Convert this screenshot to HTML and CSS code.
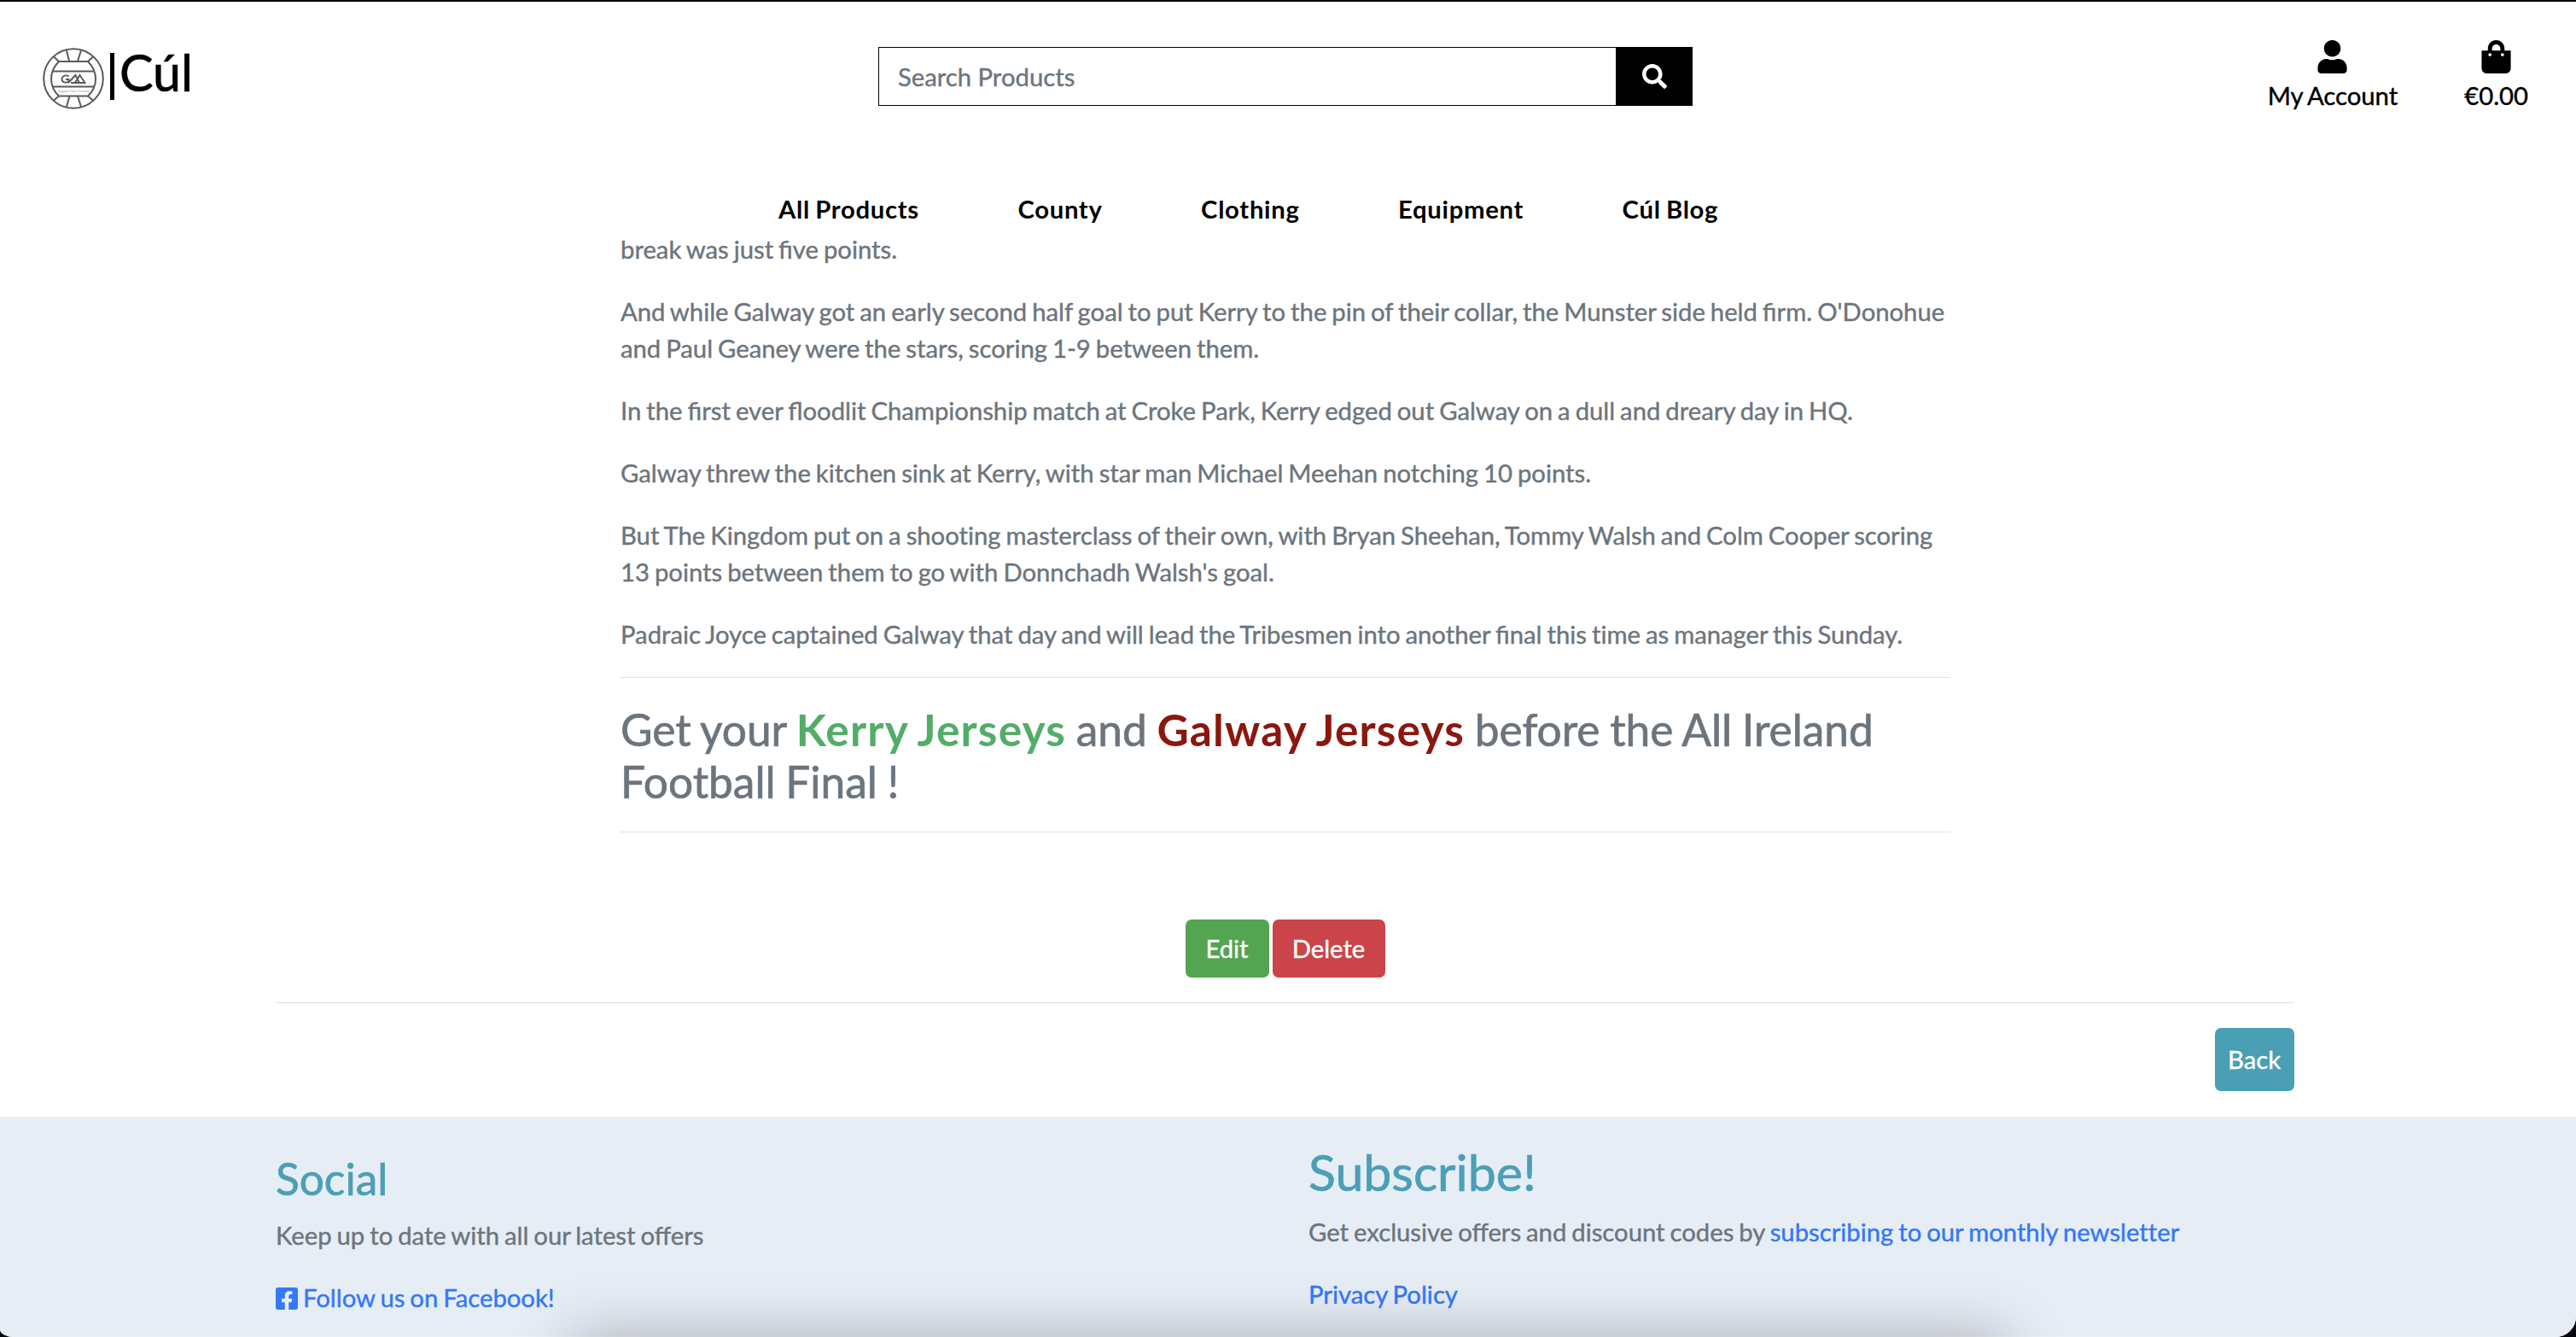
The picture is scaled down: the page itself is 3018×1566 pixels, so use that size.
FILE: index.html
```html
<!DOCTYPE html>
<html lang="en">
<head>
<meta charset="utf-8">
<title>Cúl Blog</title>
<link rel="stylesheet" href="styles.css">
</head>
<body>
<div class="window">
  <header class="header">
    <div class="topbar">
      <a class="brand" href="#">
        <svg class="brand-logo" viewBox="0 0 72 72" fill="none" stroke="#5a5a5a" stroke-width="2">
          <circle cx="36" cy="36" r="34.8"/>
          <path d="M19 16H53C65 28 65 45 53 56.500H19C7 45 7 28 19 16Z"/>
          <path d="M11.500 27.500H60.500M11.500 45.500H60.500M19 16L13 10.500M53 16L59 10.500M19 56.500L12.500 62M53 56.500L59.500 62M31 15.500L28 3M41 15.500L45 3M31.500 56.500L28 69M41 56.500L45 69"/>
          <path d="M30.500 33.500C28 31.500 23 32 22.500 36.500C22.500 41 28 41.500 30.500 39.500V37H27M30 41L38.500 32L43 41H33M38 41L43.500 32L49.500 41H42" stroke-width="1.900"/>
          <text class="brand-caption" x="36" y="52" text-anchor="middle">Support Your County</text>
        </svg>
        <span class="brand-name"><span class="brand-bar"></span>Cúl</span>
      </a>
      <form class="search">
        <input class="search-input" type="text" placeholder="Search Products">
        <button class="search-button" type="button" aria-label="Search">
          <svg viewBox="0 0 512 512" fill="#fff"><path d="M505 442.700L405.300 343c-4.500-4.500-10.600-7-17-7H372c27.600-35.300 44-79.700 44-128C416 93.100 322.900 0 208 0S0 93.100 0 208s93.100 208 208 208c48.300 0 92.700-16.400 128-44v16.300c0 6.400 2.500 12.500 7 17l99.700 99.700c9.400 9.400 24.600 9.400 33.900 0l28.300-28.300c9.400-9.400 9.400-24.600.1-34zM208 336c-70.700 0-128-57.200-128-128 0-70.700 57.200-128 128-128 70.700 0 128 57.200 128 128 0 70.700-57.200 128-128 128z"/></svg>
        </button>
      </form>
      <div class="tools">
        <a class="tool" href="#">
          <svg class="tool-icon" viewBox="0 0 448 512"><path d="M224 256c70.700 0 128-57.300 128-128S294.700 0 224 0 96 57.300 96 128s57.300 128 128 128zm89.600 32h-16.700c-22.200 10.200-46.900 16-72.900 16s-50.600-5.800-72.900-16h-16.700C60.200 288 0 348.200 0 422.400V464c0 26.500 21.500 48 48 48h352c26.500 0 48-21.500 48-48v-41.600c0-74.200-60.200-134.400-134.400-134.400z"/></svg>
          <span>My Account</span>
        </a>
        <a class="tool" href="#">
          <svg class="tool-icon" viewBox="0 0 448 512"><path d="M352 160v-32C352 57.420 294.579 0 224 0 153.420 0 96 57.420 96 128v32H0v272c0 44.183 35.817 80 80 80h288c44.183 0 80-35.817 80-80V160h-96zm-192-32c0-35.290 28.710-64 64-64s64 28.710 64 64v32H160v-32zm160 120c-13.255 0-24-10.745-24-24s10.745-24 24-24 24 10.745 24 24-10.745 24-24 24zm-192 0c-13.255 0-24-10.745-24-24s10.745-24 24-24 24 10.745 24 24-10.745 24-24 24z"/></svg>
          <span>€0.00</span>
        </a>
      </div>
    </div>
    <nav class="nav">
      <a href="#">All Products</a>
      <a href="#">County</a>
      <a href="#">Clothing</a>
      <a href="#">Equipment</a>
      <a href="#">Cúl Blog</a>
    </nav>
  </header>
  <main class="main">
    <article class="article">
      <p>break was just five points.</p>
      <p>And while Galway got an early second half goal to put Kerry to the pin of their collar, the Munster side held firm. O'Donohue<br>and Paul Geaney were the stars, scoring 1-9 between them.</p>
      <p>In the first ever floodlit Championship match at Croke Park, Kerry edged out Galway on a dull and dreary day in HQ.</p>
      <p>Galway threw the kitchen sink at Kerry, with star man Michael Meehan notching 10 points.</p>
      <p>But The Kingdom put on a <span class="plain">shooting</span> masterclass of their own, with Bryan Sheehan, Tommy Walsh and Colm Cooper scoring<br>13 points between them to go with Donnchadh Walsh's goal.</p>
      <p>Padraic Joyce captained Galway that day and will lead the Tribesmen into another final this <span class="plain">time</span> as manager this Sunday.</p>
      <hr>
      <h3>Get your <a class="kerry" href="#">Kerry Jerseys</a> and <a class="galway" href="#">Galway Jerseys</a> before the All Ireland<br>Football Final !</h3>
      <hr>
    </article>
    <div class="actions">
      <button class="btn btn-edit">Edit</button>
      <button class="btn btn-delete">Delete</button>
    </div>
    <hr class="divider">
    <div class="back-row"><a class="btn btn-back" href="#">Back</a></div>
  </main>
  <footer class="footer">
    <section class="social">
      <h3>Social</h3>
      <p>Keep up to date with all our latest offers</p>
      <p><a href="#"><svg class="fb" viewBox="0 0 448 448"><path d="M400 0H48A48 48 0 0 0 0 48v352a48 48 0 0 0 48 48h137.250V295.690h-63V224h63v-54.640c0-62.150 37-96.480 93.670-96.480 27.140 0 55.520 4.840 55.520 4.840v61h-31.270c-30.810 0-40.420 19.120-40.420 38.730V224h68.780l-11 71.690h-57.780V448H400a48 48 0 0 0 48-48V48a48 48 0 0 0-48-48z"/></svg>Follow us on Facebook!</a></p>
    </section>
    <section class="subscribe">
      <h2>Subscribe!</h2>
      <p>Get exclusive offers and discount codes by <a class="plain" href="#">subscribing to our monthly newsletter</a></p>
      <p><a href="#">Privacy Policy</a></p>
    </section>
    <div class="dock-shadow"></div>
  </footer>
</div>
</body>
</html>
```
FILE: styles.css
```css
* { box-sizing: border-box; }
html { background: #02060d; }
body {
  margin: 0;
  font: 400 29.25px/43px Lato, "Liberation Sans", sans-serif;
  word-spacing: -1.5px;
  color: #6c757d;
  -webkit-text-stroke: 0.4px currentColor;
}
a { color: inherit; text-decoration: none; }
p { margin: 0 0 30px; white-space: nowrap; }
h2, h3 { margin: 0; font-weight: 400; white-space: nowrap; -webkit-text-stroke-width: 0.7px; }
hr { height: 1px; margin: 0; border: 0; background: #e1e1e1; }
.plain { font-variant-ligatures: none; }

.window {
  display: flex;
  flex-direction: column;
  height: 1566px;
  overflow: hidden;
  border-top: 2px solid #000;
  border-radius: 0 0 24px 16px / 0 0 24px 9px;
  background: #fff;
}

.header { height: 267px; color: #000; }
.topbar {
  display: grid;
  grid-template-columns: 979px 954px 1fr;
  height: 221px;
  padding: 0 35px 0 50px;
}
.brand { display: flex; align-items: flex-start; padding-top: 54px; }
.brand-logo { width: 72px; height: 72px; }
.brand-caption { font-size: 4px; fill: #999; stroke: none; word-spacing: 0; }
.brand-name {
  display: flex;
  align-items: flex-start;
  margin: -6px 0 0 7px;
  font-size: 59.2px;
  line-height: 70px;
  -webkit-text-stroke-width: 0.7px;
}
.brand-bar { width: 5px; height: 55px; margin: 12px 6px 0 0; background: #000; }
.search { display: flex; height: 69px; margin-top: 53px; }
.search-input {
  width: 864px;
  padding: 0 0 0 22px;
  border: 1px solid #000;
  border-right: 0;
  border-radius: 0;
  outline: 0;
  background: #fff;
  font: inherit;
}
.search-input::placeholder { color: #6c757d; opacity: 1; }
.search-button {
  display: flex;
  align-items: center;
  justify-content: center;
  width: 90px;
  padding: 0;
  border: 0;
  background: #000;
}
.search-button svg { width: 29px; height: 29px; }
.tools { display: flex; justify-content: flex-end; gap: 78px; padding: 45px 21px 0 0; }
.tool { display: flex; flex-direction: column; align-items: center; }
.tool-icon { width: 35px; height: 39px; margin-bottom: 4px; }
.nav {
  display: flex;
  gap: 115.5px;
  padding-left: 912px;
  font-weight: 700;
  letter-spacing: 0.7px;
  -webkit-text-stroke-width: 0;
}

.main { display: flex; flex-direction: column; height: 1039px; padding: 1px 330px 0 323px; }
.article { width: 1558px; margin-left: 404px; }
.article hr:first-of-type { margin-top: -1px; }
.article h3 { padding: 30px 0 29px; font-size: 51.4px; line-height: 60.5px; }
.article h3 a { font-weight: 700; letter-spacing: 1.2px; -webkit-text-stroke-width: 0; }
.kerry { color: #53ad67; }
.galway { color: #8b170f; }
.actions { display: flex; justify-content: center; gap: 4px; margin: 102px 0 29px; }
.btn {
  height: 68px;
  padding: 0 22px;
  border: 0;
  border-radius: 7px;
  color: #fff;
  font: inherit;
  line-height: 68px;
}
.btn-edit { width: 98px; background: #53a551; }
.btn-delete { width: 132px; background: #cb444a; }
.back-row { display: flex; justify-content: flex-end; padding-top: 29px; }
.btn-back { width: 93px; height: 74px; padding: 0 15px; line-height: 74px; background: #4b9fb5; }

.footer {
  position: relative;
  display: grid;
  grid-template-columns: 1210px 1fr;
  height: 258px;
  padding-left: 323px;
  border-bottom: 1px solid #edf1f5;
  background: #e6edf5;
}
.footer h2, .footer h3 { color: #4b9fb5; }
.footer a { color: #3478f6; }
.social { padding-top: 42px; }
.social h3 { margin-bottom: 15px; font-size: 51.4px; line-height: 60px; }
.subscribe { padding-top: 30px; }
.subscribe h2 { margin-bottom: 14px; font-size: 59px; line-height: 69px; }
.fb { width: 26px; height: 26px; margin-right: 6px; vertical-align: -3px; fill: #3478f6; }
.dock-shadow {
  position: absolute;
  top: 258px;
  left: 670px;
  width: 1680px;
  height: 100px;
  box-shadow: 0 0 70px rgba(0, 0, 0, 0.27);
}
```
